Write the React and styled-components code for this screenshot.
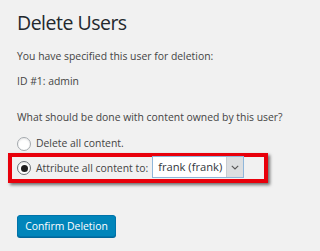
import styled, { createGlobalStyle } from 'styled-components';

const Global = createGlobalStyle`
  html, body {
    margin: 0;
    padding: 0;
    background: #f1f1f1;
  }
  body {
    font-family: "Open Sans", "Liberation Sans", sans-serif;
    color: #444;
  }
`;

const Page = styled.div`
  width: 300px;
  height: 251px;
  overflow: hidden;
  padding: 10px 17px 0;
  box-sizing: border-box;
`;

const Title = styled.h1`
  margin: 0;
  font-size: 19.5px;
  line-height: 26px;
  font-weight: 400;
  letter-spacing: -0.5px;
  color: #23282d;
`;

const Text = styled.p`
  margin: ${(p) => p.$top || 0}px 0 0;
  font-size: 10.4px;
  line-height: 16px;
  color: #444;
  white-space: nowrap;
`;

const Options = styled.div`
  margin-top: 7px;
  display: flex;
  flex-direction: column;
`;

const Option = styled.label`
  display: flex;
  align-items: center;
  gap: 5px;
  height: ${(p) => p.$h || 21}px;
  font-size: 10.4px;
  line-height: 16px;
  color: #444;
  white-space: nowrap;
`;

// rood kader om de gekozen optie
const Highlight = styled.div`
  margin-left: -9px;
  width: 260px;
  height: 30px;
  box-sizing: border-box;
  border: 4px solid #e8000b;
  box-shadow: 2px 2px 3px rgba(0, 0, 0, 0.55);
  padding-left: 5px;
`;

const Radio = styled.span`
  width: 14px;
  height: 14px;
  margin-top: ${(p) => p.$shift || 0}px;
  box-sizing: border-box;
  border-radius: 50%;
  border: 1px solid ${(p) => (p.$checked ? '#6b7177' : '#a3a8ad')};
  background: #fff;
  box-shadow: inset 0 1px 2px rgba(0, 0, 0, 0.1);
  display: flex;
  align-items: center;
  justify-content: center;
  flex: none;

  &::after {
    content: '';
    display: ${(p) => (p.$checked ? 'block' : 'none')};
    width: 7px;
    height: 7px;
    border-radius: 50%;
    background: #1e1e1e;
  }
`;

const Select = styled.div`
  align-self: flex-start;
  margin-top: -1px;
  margin-left: -1px;
  width: 92px;
  height: 22px;
  box-sizing: border-box;
  border: 1px solid #8fb6da;
  background: #fff;
  display: flex;
  align-items: stretch;
  font-size: 11.2px;
  color: #32373c;
`;

const SelectValue = styled.span`
  flex: 1;
  padding-left: 5px;
  line-height: 20px;
  white-space: nowrap;
`;

const Arrow = styled.span`
  width: 16px;
  background: #dcdee0;
  border-left: 1px solid #c9cdd1;
  display: flex;
  align-items: center;
  justify-content: center;
`;

const Button = styled.button`
  display: block;
  margin-top: 32px;
  width: 99px;
  height: 22px;
  padding: 0;
  border: 1px solid #0073aa;
  border-radius: 3px;
  background: #0085ba;
  color: #fff;
  font-family: "Open Sans", "Liberation Sans", sans-serif;
  font-size: 10.4px;
  line-height: 20px;
  box-shadow: 0 1px 0 #006799;
`;

export default function App() {
  return (
    <Page>
      <Global />
      <Title>Delete Users</Title>
      <Text $top={12}>You have specified this user for deletion:</Text>
      <Text $top={9}>ID #1: admin</Text>
      <Text $top={20}>What should be done with content owned by this user?</Text>
      <Options>
        <Option>
          <Radio $shift={3} />
          Delete all content.
        </Option>
        <Highlight>
          <Option $h={22}>
            <Radio $checked />
            Attribute all content to:
            <Select>
              <SelectValue>frank (frank)</SelectValue>
              <Arrow>
                <svg width="8" height="5" viewBox="0 0 8 5">
                  <path d="M0.8 0.8l3.2 3.2l3.2-3.2" fill="none" stroke="#555" strokeWidth="1.1" />
                </svg>
              </Arrow>
            </Select>
          </Option>
        </Highlight>
      </Options>
      <Button>Confirm Deletion</Button>
    </Page>
  );
}
